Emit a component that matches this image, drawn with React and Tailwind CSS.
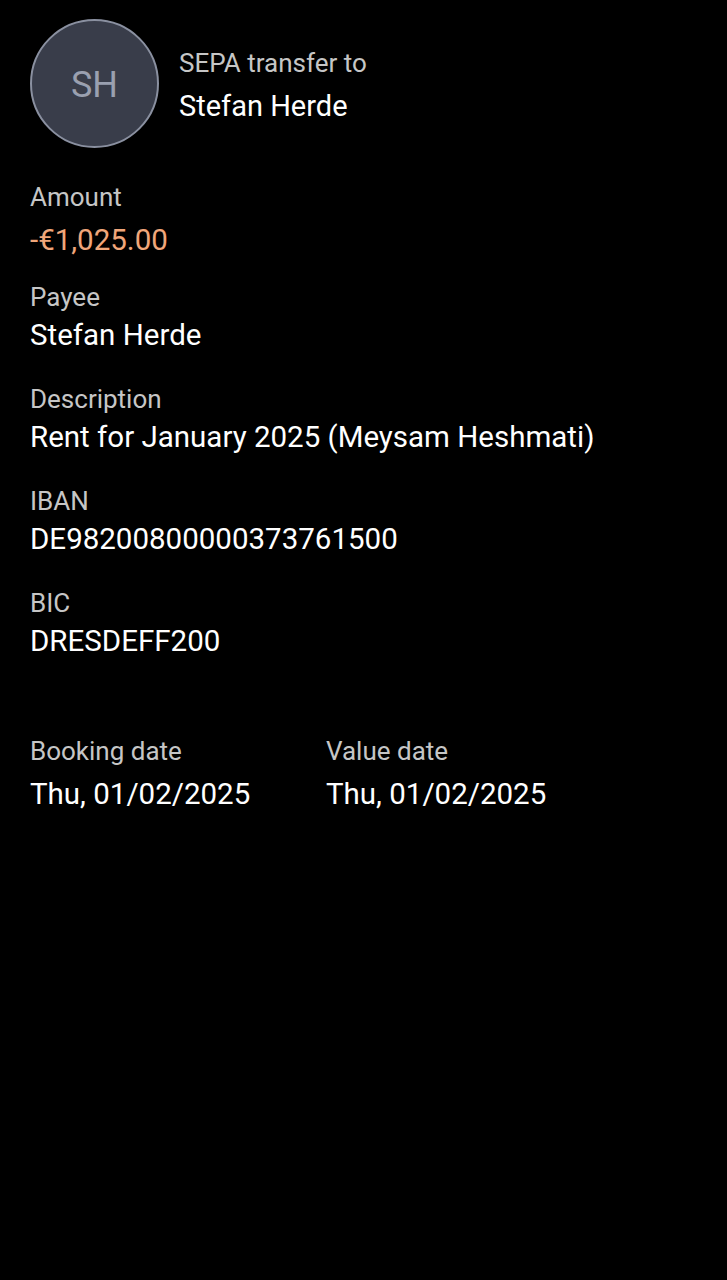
/**
 * TransferDetails — SEPA transfer detail screen (dark)
 */
const fields = [
  { label: 'Payee', value: 'Stefan Herde' },
  { label: 'Description', value: 'Rent for January 2025 (Meysam Heshmati)' },
  { label: 'IBAN', value: 'DE98200800000373761500' },
  { label: 'BIC', value: 'DRESDEFF200' },
];

function Field({ label, value }) {
  return (
    <div className="mb-[26px]">
      <div className="h-[34px] flex items-center text-[26px] text-[#c6c6c6]">{label}</div>
      <div className="h-[42px] flex items-center text-[29.5px] text-white">{value}</div>
    </div>
  );
}

export default function App() {
  return (
    <div
      className="w-[727px] h-[1280px] bg-black px-[30px] pt-[19px]"
      style={{ fontFamily: 'Roboto, "Noto Sans", sans-serif' }}
    >
      {/* Header */}
      <div className="flex items-center gap-[20px]">
        <div className="w-[129px] h-[129px] rounded-full bg-[#393d4a] border-2 border-[#8a90a0] flex items-center justify-center shrink-0">
          <span className="text-[36px] text-[#9aa0b0] pt-[3px]">SH</span>
        </div>
        <div className="pt-[9px]">
          <div className="h-[38px] flex items-center text-[26px] text-[#c6c6c6]">SEPA transfer to</div>
          <div className="h-[50px] flex items-center text-[29px] text-white">Stefan Herde</div>
        </div>
      </div>

      {/* Amount */}
      <div className="mt-[32px] mb-[14px]">
        <div className="h-[34px] flex items-center text-[26px] text-[#c6c6c6]">Amount</div>
        <div className="h-[52px] flex items-center text-[29.5px] text-[#f0a67a]">-€1,025.00</div>
      </div>

      {fields.map(f => (
        <Field key={f.label} label={f.label} value={f.value} />
      ))}

      {/* Dates */}
      <div className="flex mt-[72px]">
        <div className="w-[296px]">
          <div className="h-[34px] flex items-center text-[26px] text-[#c6c6c6]">Booking date</div>
          <div className="h-[52px] flex items-center text-[29.5px] text-white">Thu, 01/02/2025</div>
        </div>
        <div>
          <div className="h-[34px] flex items-center text-[26px] text-[#c6c6c6]">Value date</div>
          <div className="h-[52px] flex items-center text-[29.5px] text-white">Thu, 01/02/2025</div>
        </div>
      </div>
    </div>
  );
}
